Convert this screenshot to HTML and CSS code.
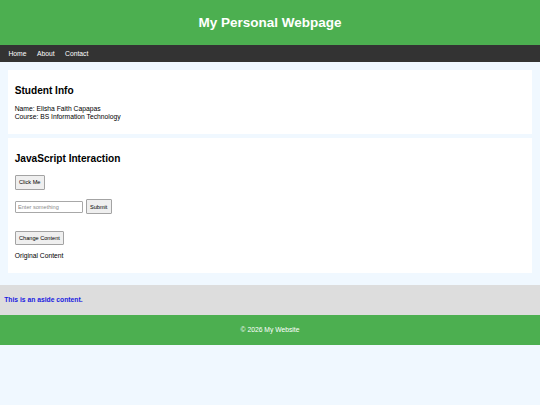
FILE: index.html
```html
<!DOCTYPE html>
<html lang="en">
<head>
<meta charset="utf-8">
<title>My Personal Webpage</title>
<link rel="stylesheet" href="styles.css">
</head>
<body>
<header class="site-header">
  <h1 class="site-title">My Personal Webpage</h1>
</header>
<nav class="site-nav">
  <a href="#" class="nav-link">Home</a>
  <a href="#" class="nav-link">About</a>
  <a href="#" class="nav-link">Contact</a>
</nav>
<main class="content">
  <section class="card">
    <h2 class="card-title">Student Info</h2>
    <p class="card-text">Name: Elisha Faith Capapas<br>Course: BS Information Technology</p>
  </section>
  <section class="card">
    <h2 class="card-title">JavaScript Interaction</h2>
    <div class="row row-first">
      <button class="btn" type="button">Click Me</button>
    </div>
    <div class="row row-second">
      <input class="text-input" type="text" placeholder="Enter something">
      <button class="btn" type="button">Submit</button>
    </div>
    <div class="row row-third">
      <button class="btn" type="button">Change Content</button>
    </div>
    <p class="card-text output">Original Content</p>
  </section>
</main>
<aside class="aside">
  <p class="aside-text">This is an aside content.</p>
</aside>
<footer class="site-footer">
  <p class="footer-text">&copy; 2026 My Website</p>
</footer>
</body>
</html>
```
FILE: styles.css
```css
* {
  box-sizing: border-box;
}

html, body {
  margin: 0;
  padding: 0;
}

body {
  background: #f0f8ff;
  font-family: "Liberation Sans", Arial, sans-serif;
  font-size: 6.75px;
  line-height: 7.76px;
  color: #000;
}

.site-header {
  background: #4caf50;
  color: #fff;
  text-align: center;
  padding: 14.9px 0;
}

.site-title {
  margin: 0;
  font-size: 13.5px;
  font-weight: bold;
  line-height: 15.5px;
}

.site-nav {
  background: #333;
  display: flex;
  gap: 10.5px;
  padding: 4.5px 8.4px;
}

.nav-link {
  color: #fff;
  text-decoration: none;
}

.content {
  padding: 8.4px;
}

.card {
  background: #fff;
  padding: 6.3px;
  margin-bottom: 4.3px;
}

.card-title {
  font-size: 10.125px;
  font-weight: bold;
  margin: 8.4px 0;
  line-height: 11.64px;
}

.card-text {
  margin: 6.75px 0;
}

.row {
  display: flex;
  align-items: center;
  gap: 2.4px;
}

.row-first {
  margin-top: 10.9px;
}

.row-second {
  margin-top: 9.3px;
}

.row-third {
  margin-top: 16.3px;
}

.output {
  margin-top: 6.4px;
}

.btn {
  font-family: "Liberation Sans", Arial, sans-serif;
  font-size: 5.625px;
  line-height: 6.47px;
  color: #000;
  background: #efefef;
  border: 1px solid #a3a3a3;
  border-radius: 1px;
  padding: 3.2px 3.3px;
  margin: 0;
  box-sizing: content-box;
}

.text-input {
  font-family: "Liberation Sans", Arial, sans-serif;
  font-size: 5.625px;
  width: 68.6px;
  height: 12.3px;
  padding: 0 2.3px;
  margin: 0;
  border: 1px solid #a8a8a8;
  border-radius: 1px;
  background: #fff;
}

.text-input::placeholder {
  color: #8a8a8a;
}

.aside {
  background: #ddd;
  padding: 4.2px;
}

.aside-text {
  margin: 6.75px 0;
  color: #1a1ae0;
  font-weight: bold;
}

.site-footer {
  background: #4caf50;
  color: #fff;
  text-align: center;
  padding: 4.2px;
}

.footer-text {
  margin: 6.75px 0;
}
```
